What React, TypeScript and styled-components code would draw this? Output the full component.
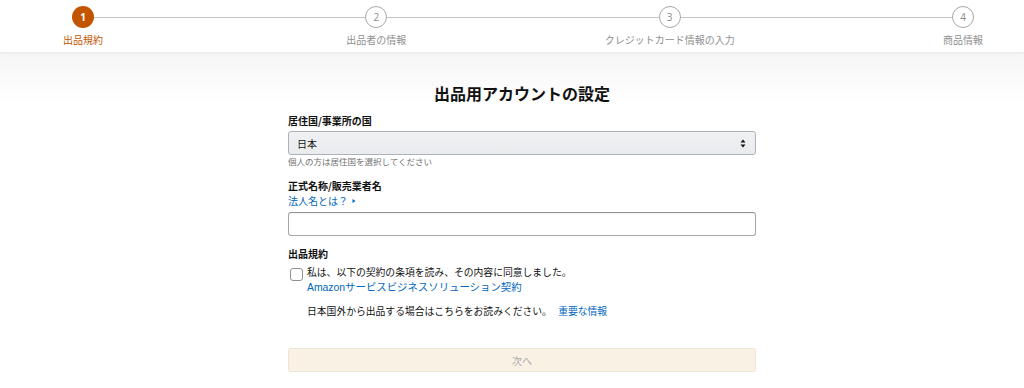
import React from "react"
import styled, { createGlobalStyle } from "styled-components"

const GlobalStyle = createGlobalStyle`
  html, body {
    margin: 0;
    padding: 0;
    background: #fff;
  }
  body {
    font-family: "Liberation Sans", "Noto Sans CJK JP", sans-serif;
    color: #111;
  }
`

const steps = ["出品規約", "出品者の情報", "クレジットカード情報の入力", "商品情報"]

export default function App() {
  const current = 0

  return (
    <>
      <GlobalStyle />
      <Page>
        <Header>
          <StepperTrack>
            {steps.map((label, i) => (
              <React.Fragment key={label}>
                {i > 0 && <Connector />}
                <Step>
                  <Circle $active={i === current}>{i + 1}</Circle>
                  <StepLabel $active={i === current}>{label}</StepLabel>
                </Step>
              </React.Fragment>
            ))}
          </StepperTrack>
        </Header>
        <Main>
          <Form>
            <Title>出品用アカウントの設定</Title>

            <FieldLabel>居住国/事業所の国</FieldLabel>
            <SelectBox>
              <span>日本</span>
              <svg width="6" height="9" viewBox="0 0 6 9">
                <path d="M3 0.5 L5.5 3.5 L0.5 3.5 Z" fill="#111" />
                <path d="M3 8.5 L5.5 5.5 L0.5 5.5 Z" fill="#111" />
              </svg>
            </SelectBox>
            <Hint>個人の方は居住国を選択してください</Hint>

            <FieldLabel $gap={12}>正式名称/販売業者名</FieldLabel>
            <HelpLink>
              法人名とは？
              <svg width="6" height="6" viewBox="0 0 6 6">
                <path d="M1.5 1 L4.5 3 L1.5 5 Z" fill="#0066c0" />
              </svg>
            </HelpLink>
            <TextInput />

            <FieldLabel $gap={11}>出品規約</FieldLabel>
            <AgreeRow>
              <Checkbox />
              <AgreeText>
                私は、以下の契約の条項を読み、その内容に同意しました。
                <Link>Amazonサービスビジネスソリューション契約</Link>
              </AgreeText>
            </AgreeRow>
            <Notice>
              日本国外から出品する場合はこちらをお読みください。 <InlineLink>重要な情報</InlineLink>
            </Notice>

            <NextButton>次へ</NextButton>
          </Form>
        </Main>
      </Page>
    </>
  )
}

const Page = styled.div`
  width: 1024px;
  height: 388px;
  overflow: hidden;
  background: linear-gradient(#f5f5f5 52px, #ffffff 105px);
`

const Header = styled.header`
  height: 52px;
  background: #fff;
  box-shadow: 0 1px 3px rgba(0, 0, 0, 0.07);
  position: relative;
  box-sizing: border-box;
  padding-top: 6px;
`

const StepperTrack = styled.div`
  display: flex;
  align-items: flex-start;
  padding: 0 50px 0 72px;
`

const Connector = styled.div`
  flex: 1;
  height: 1px;
  margin-top: 11px;
  background: #c4c4c4;
`

const Step = styled.div`
  width: 22px;
  display: flex;
  flex-direction: column;
  align-items: center;
`

const Circle = styled.div<{ $active?: boolean }>`
  width: 22px;
  height: 22px;
  box-sizing: border-box;
  border-radius: 50%;
  display: flex;
  align-items: center;
  justify-content: center;
  font-family: "Open Sans", "Liberation Sans", sans-serif;
  font-size: 10px;
  font-weight: ${p => (p.$active ? 700 : 400)};
  color: ${p => (p.$active ? "#fff" : "#8a8a8a")};
  background: ${p => (p.$active ? "#c45500" : "#fff")};
  border: ${p => (p.$active ? "none" : "1px solid #a8a8a8")};
`

const StepLabel = styled.div<{ $active?: boolean }>`
  margin-top: 5px;
  white-space: nowrap;
  font-family: "Noto Sans CJK JP", sans-serif;
  font-size: 10px;
  line-height: 14px;
  color: ${p => (p.$active ? "#c45500" : "#8f8f8f")};
`

const Main = styled.main`
  padding-top: 31px;
`

const Form = styled.div`
  width: 468px;
  margin: 0 auto;
  padding-left: 20px;
  display: flex;
  flex-direction: column;
`

const Title = styled.h1`
  margin: 0 0 11px;
  text-align: center;
  font-family: "Noto Sans CJK JP", sans-serif;
  font-size: 16px;
  line-height: 20px;
  font-weight: 700;
  color: #111;
`

const FieldLabel = styled.div<{ $gap?: number }>`
  margin-top: ${p => p.$gap ?? 0}px;
  font-family: "Noto Sans CJK JP", sans-serif;
  font-size: 10px;
  line-height: 14px;
  font-weight: 700;
  color: #111;
`

const SelectBox = styled.div`
  margin-top: 3px;
  height: 24px;
  box-sizing: border-box;
  display: flex;
  align-items: center;
  justify-content: space-between;
  padding: 0 9px 0 8px;
  border: 1px solid #adb1b8;
  border-radius: 3px;
  background: linear-gradient(#f0f1f3, #e9ebee);
  font-family: "Noto Sans CJK JP", sans-serif;
  font-size: 10px;
  color: #111;
`

const Hint = styled.div`
  font-family: "Noto Sans CJK JP", sans-serif;
  font-size: 8.5px;
  line-height: 12px;
  color: #6f6f6f;
`

const HelpLink = styled.div`
  margin-top: 1px;
  display: flex;
  align-items: center;
  gap: 3px;
  font-family: "Noto Sans CJK JP", sans-serif;
  font-size: 10px;
  line-height: 14px;
  color: #0066c0;
`

const TextInput = styled.div`
  margin-top: 4px;
  height: 24px;
  box-sizing: border-box;
  border: 1px solid #a6a6a6;
  border-top-color: #949494;
  border-radius: 3px;
  background: #fff;
  box-shadow: inset 0 1px 0 rgba(0, 0, 0, 0.05);
`

const AgreeRow = styled.div`
  margin-top: 4px;
  display: flex;
  align-items: flex-start;
  gap: 4px;
  padding-left: 2px;
`

const Checkbox = styled.div`
  width: 13px;
  height: 13px;
  margin-top: 2.5px;
  box-sizing: border-box;
  border: 1px solid #8d9096;
  border-radius: 3px;
  background: #fff;
  flex-shrink: 0;
`

const AgreeText = styled.div`
  display: flex;
  flex-direction: column;
  font-family: "Noto Sans CJK JP", sans-serif;
  font-size: 9.8px;
  line-height: 15px;
  color: #111;
`

const Link = styled.span`
  color: #0066c0;
  font-size: 10.4px;
  font-family: "Liberation Sans", "Noto Sans CJK JP", sans-serif;
`

const Notice = styled.div`
  margin-top: 9px;
  padding-left: 19px;
  font-family: "Noto Sans CJK JP", sans-serif;
  font-size: 9.8px;
  line-height: 15px;
  color: #111;
`

const InlineLink = styled.span`
  color: #0066c0;
  margin-left: 4px;
`

const NextButton = styled.div`
  margin-top: 29px;
  height: 24px;
  box-sizing: border-box;
  display: flex;
  align-items: center;
  justify-content: center;
  border: 1px solid #efe5d2;
  border-radius: 3px;
  background: #f8f1e4;
  font-family: "Noto Sans CJK JP", sans-serif;
  font-size: 10px;
  color: #a9a9a9;
`
